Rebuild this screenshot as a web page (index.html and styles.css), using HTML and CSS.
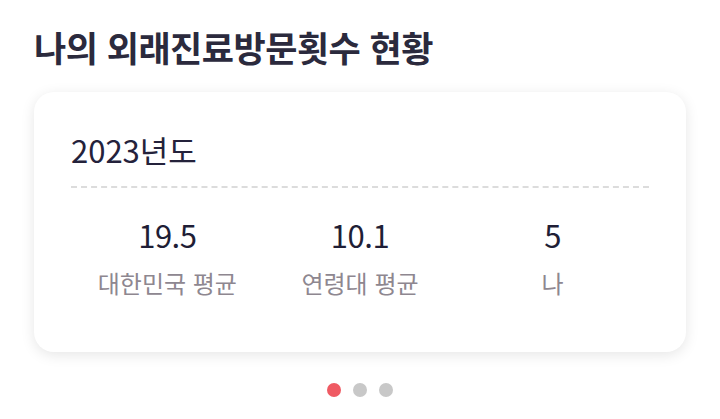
FILE: index.html
```html
<!DOCTYPE html>
<html lang="ko">
<head>
    <meta charset="UTF-8">
    <meta name="viewport" content="width=device-width, initial-scale=1.0">
    <title>외래진료 방문횟수</title>
    <link rel="stylesheet" href="styles.css">
</head>
<body>
    <section class="visit-section">
        <h1 class="section-title">나의 외래진료방문횟수 현황</h1>

        <div class="visit-card">
            <div class="visit-year">2023년도</div>
            <div class="visit-stats">
                <div class="stat">
                    <div class="stat-value">19.5</div>
                    <div class="stat-label">대한민국 평균</div>
                </div>
                <div class="stat">
                    <div class="stat-value">10.1</div>
                    <div class="stat-label">연령대 평균</div>
                </div>
                <div class="stat">
                    <div class="stat-value">5</div>
                    <div class="stat-label">나</div>
                </div>
            </div>
        </div>

        <!-- 페이지 표시 -->
        <div class="pager">
            <span class="dot active"></span>
            <span class="dot"></span>
            <span class="dot"></span>
        </div>
    </section>
</body>
</html>
```

FILE: styles.css
```css
body {
    margin: 0;
    background-color: #fff;
    font-family: "Noto Sans CJK KR", "Noto Sans", sans-serif;
    color: #22213a;
}

.visit-section {
    padding: 24px 34px 0;
}

.section-title {
    margin: 0 0 22px;
    font-size: 35px;
    font-weight: 700;
    line-height: 46px;
    color: #2b2a3d;
    letter-spacing: -0.5px;
}

/* 카드 */
.visit-card {
    background-color: #fff;
    border-radius: 20px;
    box-shadow: 0 3px 14px rgba(0, 0, 0, 0.10);
    padding: 38px 37px 52px;
}

.visit-year {
    font-size: 31px;
    line-height: 40px;
    color: #24223b;
    padding-bottom: 16px;
    border-bottom: 2px dashed #dcdcdc;
}

.visit-stats {
    display: grid;
    grid-template-columns: repeat(3, 1fr);
    padding-top: 27px;
}

.stat {
    text-align: center;
}

.stat-value {
    font-size: 31px;
    line-height: 40px;
    color: #1f1e36;
    letter-spacing: -0.5px;
}

.stat-label {
    font-size: 24px;
    line-height: 34px;
    margin-top: 11px;
    color: #8e8790;
}

/* 페이지 표시 */
.pager {
    display: flex;
    justify-content: center;
    gap: 12px;
    margin-top: 31px;
}

.dot {
    width: 14px;
    height: 14px;
    border-radius: 50%;
    background-color: #c8c8c8;
}

.dot.active {
    background-color: #ef5a63;
}
```
